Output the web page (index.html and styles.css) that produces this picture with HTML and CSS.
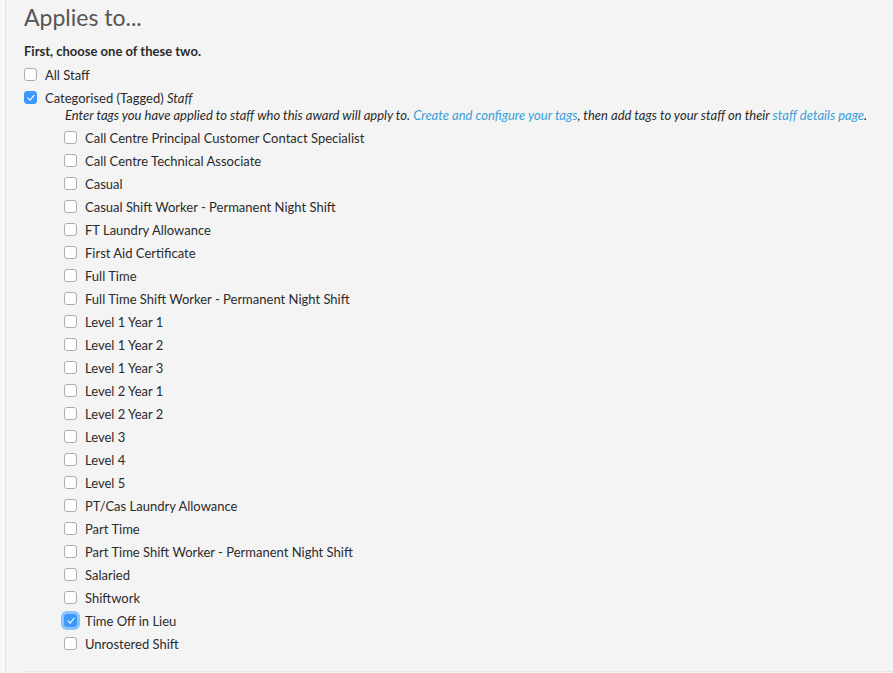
FILE: index.html
```html
<!DOCTYPE html>
<html>
<head>
<meta charset="utf-8">
<link rel="stylesheet" href="styles.css">
</head>
<body>
<div class="panel">
  <h2 class="title">Applies to...</h2>
  <div class="lead">First, choose one of these two.</div>
  <label class="row"><span class="cb"></span>All Staff</label>
  <label class="row"><span class="cb on"></span>Categorised (Tagged)&nbsp;<em>Staff</em></label>
  <div class="hint">Enter tags you have applied to staff who this award will apply to. <a href="#">Create and configure your tags</a>, then add tags to your staff on their <a href="#">staff details page</a>.</div>
  <div class="tags">
    <label class="row"><span class="cb"></span>Call Centre Principal Customer Contact Specialist</label>
    <label class="row"><span class="cb"></span>Call Centre Technical Associate</label>
    <label class="row"><span class="cb"></span>Casual</label>
    <label class="row"><span class="cb"></span>Casual Shift Worker - Permanent Night Shift</label>
    <label class="row"><span class="cb"></span>FT Laundry Allowance</label>
    <label class="row"><span class="cb"></span>First Aid Certificate</label>
    <label class="row"><span class="cb"></span>Full Time</label>
    <label class="row"><span class="cb"></span>Full Time Shift Worker - Permanent Night Shift</label>
    <label class="row"><span class="cb"></span>Level 1 Year 1</label>
    <label class="row"><span class="cb"></span>Level 1 Year 2</label>
    <label class="row"><span class="cb"></span>Level 1 Year 3</label>
    <label class="row"><span class="cb"></span>Level 2 Year 1</label>
    <label class="row"><span class="cb"></span>Level 2 Year 2</label>
    <label class="row"><span class="cb"></span>Level 3</label>
    <label class="row"><span class="cb"></span>Level 4</label>
    <label class="row"><span class="cb"></span>Level 5</label>
    <label class="row"><span class="cb"></span>PT/Cas Laundry Allowance</label>
    <label class="row"><span class="cb"></span>Part Time</label>
    <label class="row"><span class="cb"></span>Part Time Shift Worker - Permanent Night Shift</label>
    <label class="row"><span class="cb"></span>Salaried</label>
    <label class="row"><span class="cb"></span>Shiftwork</label>
    <label class="row"><span class="cb on focus"></span>Time Off in Lieu</label>
    <label class="row"><span class="cb"></span>Unrostered Shift</label>
  </div>
  <div class="rule"></div>
</div>
</body>
</html>
```
FILE: styles.css
```css
html, body {
  margin: 0;
  padding: 0;
  background: #f8f8f8;
  font-family: Lato, "Open Sans", sans-serif;
  color: #2b2b2b;
}
.panel {
  margin-left: 5px;
  border-left: 1px solid #e2e2e2;
  background: #f4f4f4;
  min-height: 673px;
  padding: 0 0 0 18px;
  box-sizing: border-box;
}
.title {
  margin: 0;
  font-size: 23px;
  font-weight: 400;
  color: #555;
  line-height: 32px;
  padding-top: 1px;
}
.lead {
  font-size: 13px;
  font-weight: 700;
  line-height: 20px;
  margin-top: 8px;
  margin-bottom: 2px;
}
.row {
  display: flex;
  align-items: center;
  height: 23px;
  font-size: 13px;
  white-space: nowrap;
}
.cb {
  width: 11px;
  height: 11px;
  border: 1px solid #adadad;
  border-radius: 3px;
  background: #fff;
  margin-right: 8px;
  flex: none;
  position: relative;
}
.cb.on {
  background: #3b99fc;
  border-color: #3b99fc;
}
.cb.on::after {
  content: "";
  position: absolute;
  left: 3.5px;
  top: 1px;
  width: 2.5px;
  height: 6px;
  border: solid #fff;
  border-width: 0 1.5px 1.5px 0;
  transform: rotate(40deg);
}
.cb.focus {
  box-shadow: 0 0 0 3px rgba(59, 153, 252, 0.55);
}
.hint {
  font-style: italic;
  font-size: 13px;
  line-height: 18px;
  margin-left: 41px;
  margin-top: -3px;
  margin-bottom: 2px;
  white-space: nowrap;
}
.hint a {
  color: #3a9fd8;
  text-decoration: none;
}
.tags {
  margin-left: 40px;
}
.rule {
  margin-top: 16px;
  border-top: 1px solid #e6e6e6;
}
```
